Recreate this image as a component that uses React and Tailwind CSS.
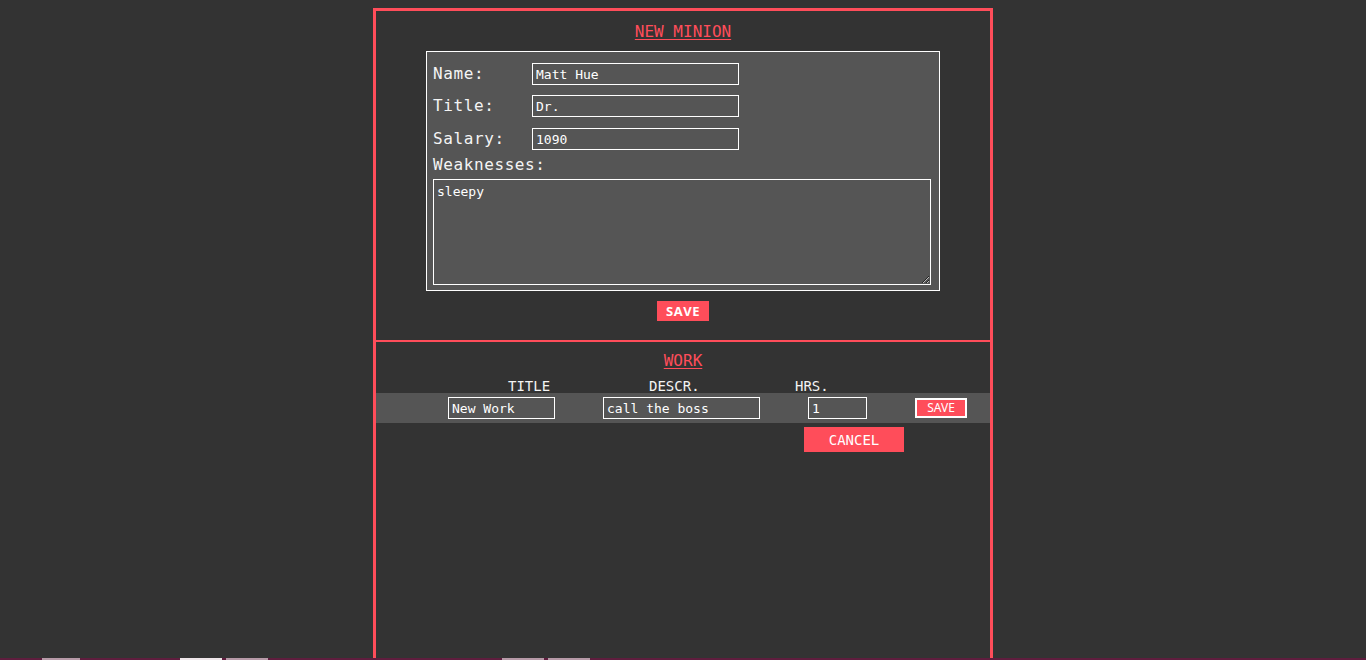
import { useState } from 'react'

// Minion editor: profile form on top, work entry below
const mono = { fontFamily: '"DejaVu Sans Mono", "Liberation Mono", monospace' }

function Field({ label, value, onChange, className = 'mb-[10px]' }) {
  return (
    <div className={`flex items-center h-[22px] ${className}`}>
      <label className="w-[99px] text-[16px] tracking-[0.6px] text-[#f4f4f4] leading-none">{label}</label>
      <input
        className="w-[207px] h-[22px] border border-white bg-transparent px-[3px] text-[13px] text-white outline-none"
        style={mono}
        value={value}
        onChange={(e) => onChange(e.target.value)}
      />
    </div>
  )
}

export default function App() {
  const [minion, setMinion] = useState({ name: 'Matt Hue', title: 'Dr.', salary: '1090', weaknesses: 'sleepy' })
  const [work, setWork] = useState({ title: 'New Work', descr: 'call the boss', hrs: '1' })

  const set = (key) => (v) => setMinion({ ...minion, [key]: v })

  return (
    <div className="h-[660px] bg-[#333333] overflow-hidden flex flex-col" style={mono}>
      <div className="flex-1 overflow-hidden pt-[8px]">
        <div className="mx-auto w-[620px] h-[720px] border-[3px] border-[#ff4d5a]">
          {/* New minion */}
          <section className="flex flex-col items-center pt-[11px]">
            <h2 className="text-[16px] leading-[20px] text-[#ff4d5a] underline underline-offset-2">NEW MINION</h2>
            <div className="mt-[9px] w-[514px] border border-white bg-[#555555] pt-[11px] pl-[6px] pr-[9px] pb-[5px]">
              <Field label="Name:" value={minion.name} onChange={set('name')} />
              <Field label="Title:" value={minion.title} onChange={set('title')} className="mb-[11px]" />
              <Field label="Salary:" value={minion.salary} onChange={set('salary')} className="mb-[5px]" />
              <div className="text-[16px] tracking-[0.6px] leading-[20px] text-[#f4f4f4]">Weaknesses:</div>
              <textarea
                className="mt-[4px] block w-[498px] h-[106px] border border-white bg-transparent px-[3px] py-[2px] text-[13px] text-white outline-none"
                style={mono}
                value={minion.weaknesses}
                onChange={(e) => set('weaknesses')(e.target.value)}
              />
            </div>
            <button
              className="mt-[10px] w-[52px] h-[20px] bg-[#ff4d5a] text-white text-[13px] font-bold tracking-[0.5px] leading-none"
              style={{ fontFamily: '"Open Sans", "Noto Sans", sans-serif' }}
            >
              SAVE
            </button>
          </section>

          <div className="mt-[19px] border-t-2 border-[#ff4d5a]" />

          {/* Work */}
          <section className="flex flex-col">
            <h2 className="self-center mt-[9px] text-[16px] leading-[20px] text-[#ff4d5a] underline underline-offset-2">WORK</h2>
            <div className="flex pl-[132px] mt-[8px] h-[14px] items-center text-[14px] text-[#f4f4f4]">
              <span className="w-[141px]">TITLE</span>
              <span className="w-[146px]">DESCR.</span>
              <span>HRS.</span>
            </div>
            <div className="flex items-center h-[30px] bg-[#555555] pl-[72px]">
              <input
                className="w-[107px] h-[22px] border border-white bg-transparent px-[3px] text-[13px] text-white outline-none"
                style={mono}
                value={work.title}
                onChange={(e) => setWork({ ...work, title: e.target.value })}
              />
              <input
                className="ml-[48px] w-[157px] h-[22px] border border-white bg-transparent px-[3px] text-[13px] text-white outline-none"
                style={mono}
                value={work.descr}
                onChange={(e) => setWork({ ...work, descr: e.target.value })}
              />
              <input
                className="ml-[48px] w-[59px] h-[22px] border border-white bg-transparent px-[3px] text-[13px] text-white outline-none"
                style={mono}
                value={work.hrs}
                onChange={(e) => setWork({ ...work, hrs: e.target.value })}
              />
              <button
                className="ml-[48px] w-[52px] h-[20px] border-2 border-white bg-[#ff4d5a] text-white text-[12px] leading-none"
                style={{ fontFamily: '"Noto Sans", "Open Sans", sans-serif' }}
              >
                SAVE
              </button>
            </div>
            <div className="pl-[428px] mt-[4px]">
              <button className="w-[100px] h-[25px] bg-[#ff4d5a] text-white text-[14px] leading-none" style={mono}>
                CANCEL
              </button>
            </div>
          </section>
        </div>
      </div>
      <div className="h-[2px] bg-[#5f1d3e] flex">
        <div className="ml-[42px] w-[38px] bg-[#b79aa8]" />
        <div className="ml-[100px] w-[42px] bg-[#efe6ea]" />
        <div className="ml-[4px] w-[42px] bg-[#b79aa8]" />
        <div className="ml-[234px] w-[42px] bg-[#b79aa8]" />
        <div className="ml-[4px] w-[42px] bg-[#b79aa8]" />
      </div>
    </div>
  )
}
